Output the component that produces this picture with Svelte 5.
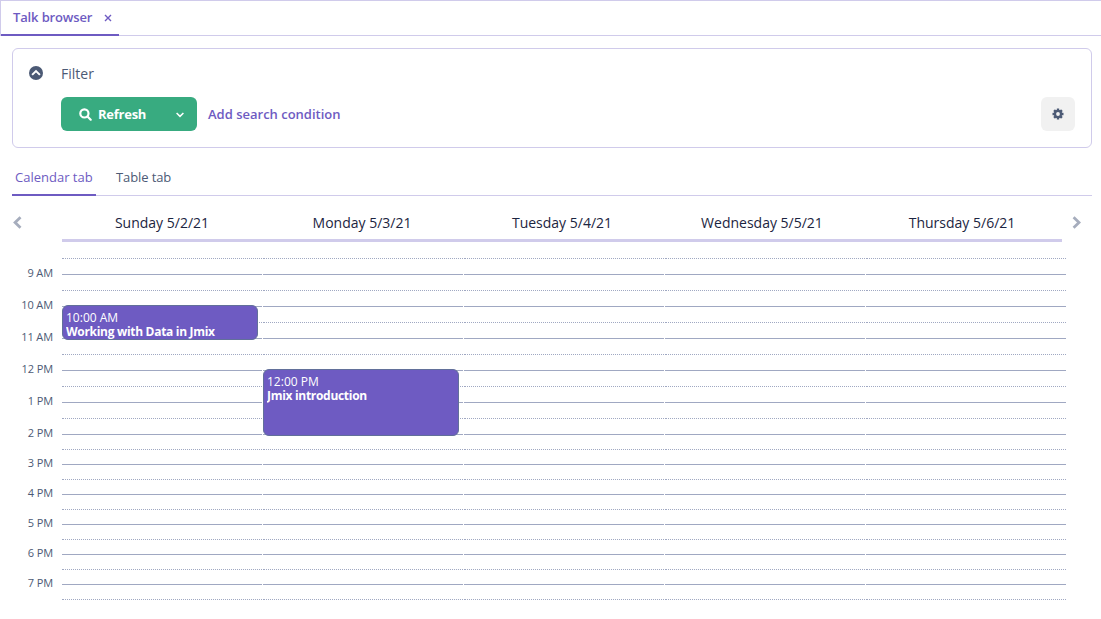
<script>
  const days = ['Sunday 5/2/21', 'Monday 5/3/21', 'Tuesday 5/4/21', 'Wednesday 5/5/21', 'Thursday 5/6/21'];
  const hours = ['9 AM', '10 AM', '11 AM', '12 PM', '1 PM', '2 PM', '3 PM', '4 PM', '5 PM', '6 PM', '7 PM'];
  // Half-hour slots: the upper part of the day is slightly taller.
  const slots = Array.from({ length: 23 }, (_, i) => ({
    height: i === 0 ? 17 : i < 12 ? 16 : 15,
    hour: i % 2 === 1
  }));
  const events = [
    { day: 0, top: 63, height: 35, time: '10:00 AM', title: 'Working with Data in Jmix' },
    { day: 1, top: 127, height: 67, time: '12:00 PM', title: 'Jmix introduction' }
  ];
</script>

<div class="page">
  <header class="window-tabs">
    <div class="window-tab">
      <span>Talk browser</span>
      <svg class="close" viewBox="0 0 8 8"><path d="M1 1L7 7M7 1L1 7" /></svg>
    </div>
  </header>

  <section class="filter">
    <div class="caption">
      <svg class="toggle" viewBox="0 0 14 14"><circle cx="7" cy="7" r="7" /><path d="M3.1 8.9L7 5.1L10.9 8.9" /></svg>
      <span>Filter</span>
    </div>
    <div class="actions">
      <div class="refresh">
        <svg class="search" viewBox="0 0 13 13"><circle cx="5.4" cy="5.4" r="4.1" /><path d="M8.5 8.5L11.7 11.7" /></svg>
        <span>Refresh</span>
        <svg class="down" viewBox="0 0 8 6"><path d="M0.6 1L4 4.4L7.4 1" /></svg>
      </div>
      <span class="add">Add search condition</span>
      <div class="settings">
        <svg viewBox="0 0 12 12">
          <g transform="translate(6 6)">
            {#each [0, 45, 90, 135] as angle}
              <rect x="-1.2" y="-5.5" width="2.4" height="11" rx="0.3" transform="rotate({angle})" />
            {/each}
            <circle r="4.2" />
            <circle class="hole" r="1.9" />
          </g>
        </svg>
      </div>
    </div>
  </section>

  <nav class="tabs">
    <span class="tab active">Calendar tab</span>
    <span class="tab">Table tab</span>
  </nav>

  <div class="days">
    <svg class="arrow" viewBox="0 0 9 13"><path d="M7.5 1.3L2.1 6.5L7.5 11.7" /></svg>
    <div class="names">
      {#each days as day}<span>{day}</span>{/each}
    </div>
    <svg class="arrow next" viewBox="0 0 9 13"><path d="M1.6 1.3L7 6.5L1.6 11.7" /></svg>
  </div>

  <div class="schedule">
    <div class="hours">
      {#each hours as hour, i}<span class:compact={i > 4}>{hour}</span>{/each}
    </div>
    <div class="columns">
      {#each days as _, d}
        <div class="column">
          {#each slots as slot}
            <div class="slot" class:hour={slot.hour} style="height: {slot.height}px"></div>
          {/each}
          {#each events.filter((e) => e.day === d) as event}
            <div class="event" style="top: {event.top}px; height: {event.height}px">
              <div>{event.time}</div>
              <strong>{event.title}</strong>
            </div>
          {/each}
        </div>
      {/each}
    </div>
  </div>
</div>

<style>
  :global(body) { background: #fff; overflow: hidden; }
  .page {
    box-sizing: border-box;
    width: 1101px;
    height: 619px;
    overflow: hidden;
    border-top: 1px solid #d0cbeb;
    font: 13px/18px "Open Sans", sans-serif;
    color: #4c5a75;
  }
  svg { display: block; flex: none; fill: none; }
  .window-tabs {
    box-sizing: border-box;
    height: 35px;
    display: flex;
    border-left: 1px solid #d0cbeb;
    border-bottom: 1px solid #d0cbeb;
  }
  .window-tab {
    box-sizing: border-box;
    width: 118px;
    height: 35px;
    display: flex;
    align-items: center;
    padding: 0 0 2px 12px;
    border-bottom: 2px solid #6e5bc2;
    color: #6e5bc2;
    font-weight: 600;
    letter-spacing: -0.14px;
  }
  .close { width: 8px; height: 8px; margin: 3px 0 0 12px; stroke: #6e5bc2; stroke-width: 1.4; }
  .filter {
    box-sizing: border-box;
    height: 100px;
    margin: 12px 9px 0 12px;
    padding: 15px 16px 0;
    border: 1px solid #d0cbeb;
    border-radius: 6px;
  }
  .caption { display: flex; align-items: center; gap: 18px; height: 20px; font-size: 14px; }
  .toggle { width: 14px; height: 14px; margin-bottom: 2px; }
  .toggle circle { fill: #4c5a75; }
  .toggle path { stroke: #fff; stroke-width: 2; }
  .actions { display: flex; align-items: center; margin: 13px 0 0 32px; font-weight: 600; }
  .refresh {
    box-sizing: border-box;
    width: 136px;
    height: 34px;
    display: flex;
    align-items: center;
    padding: 0 13px 0 18px;
    border-radius: 6px;
    background: #38ab80;
    color: #fff;
    font-weight: 700;
    letter-spacing: -0.25px;
  }
  .search { width: 13px; height: 13px; margin-right: 6px; stroke: #fff; stroke-width: 2.2; stroke-linecap: round; }
  .down { width: 8px; height: 6px; margin: 1px 0 0 auto; stroke: #fff; stroke-width: 1.5; }
  .add { margin-left: 11px; color: #6e5bc2; }
  .settings {
    width: 34px;
    height: 34px;
    margin-left: auto;
    display: flex;
    align-items: center;
    justify-content: center;
    border-radius: 6px;
    background: #f1f1f1;
  }
  .settings svg { width: 12px; height: 12px; fill: #4c5a75; }
  .settings .hole { fill: #f1f1f1; }
  .tabs {
    box-sizing: border-box;
    height: 36px;
    margin: 12px 9px 0 12px;
    display: flex;
    gap: 17px;
    border-bottom: 1px solid #d0cbeb;
  }
  .tab { box-sizing: border-box; height: 36px; padding: 8px 3px 0; letter-spacing: -0.1px; }
  .active { width: 84px; border-bottom: 2px solid #6e5bc2; color: #6e5bc2; letter-spacing: 0; }
  .days { display: flex; height: 46px; padding-left: 13px; }
  .arrow { width: 9px; height: 13px; margin-top: 20px; stroke: #a6adbd; stroke-width: 2.8; }
  .next { margin-left: 10px; }
  .names {
    box-sizing: border-box;
    width: 1000px;
    margin-left: 40px;
    display: grid;
    grid-template-columns: repeat(5, 200px);
    border-bottom: 3px solid #d0cbeb;
    padding-top: 18px;
    color: #1c2541;
    font-size: 14px;
    text-align: center;
  }
  .schedule { display: flex; }
  .hours {
    width: 53px;
    margin-right: 9px;
    padding-top: 15px;
    display: flex;
    flex-direction: column;
    text-align: right;
    font-size: 11px;
    line-height: 32px;
    letter-spacing: -0.1px;
  }
  .hours .compact { line-height: 30px; position: relative; top: 1px; }
  .columns { display: flex; gap: 1px; }
  .column { position: relative; width: 200px; }
  .slot { box-sizing: border-box; border-bottom: 1px dotted #a0a8c2; }
  .slot.hour { border-bottom-style: solid; }
  .event {
    position: absolute;
    left: 0;
    box-sizing: border-box;
    width: 196px;
    overflow: hidden;
    padding: 5px 3px 0;
    border: 1px solid #62709a;
    border-radius: 6px;
    background: #6e5bc2;
    color: #fff;
    font-size: 12px;
    line-height: 14px;
  }
  .event strong { display: block; height: 14px; overflow: hidden; letter-spacing: -0.3px; }
</style>
